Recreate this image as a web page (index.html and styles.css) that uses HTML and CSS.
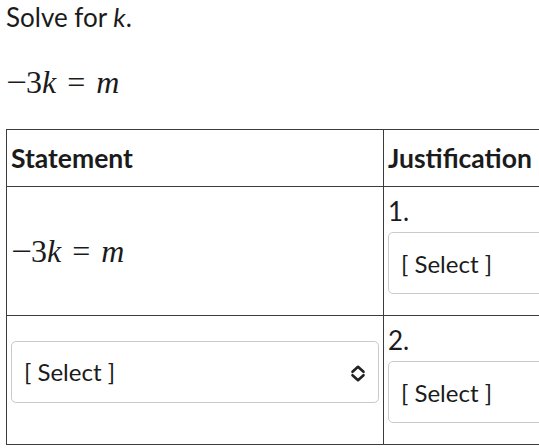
FILE: index.html
```html
<!DOCTYPE html>
<html lang="en">
<head>
<meta charset="utf-8">
<title>Solve for k</title>
<link rel="stylesheet" href="styles.css">
</head>
<body>
  <p class="prompt">Solve for <i>k</i>.</p>
  <p class="math eq-top"><span class="op">&minus;</span>3<i>k</i><span class="rel">=</span><i>m</i></p>

  <table class="proof">
    <colgroup>
      <col class="col-statement">
      <col class="col-justification">
    </colgroup>
    <thead>
      <tr>
        <th>Statement</th>
        <th>Justification</th>
      </tr>
    </thead>
    <tbody>
      <tr>
        <td class="statement">
          <span class="math"><span class="op">&minus;</span>3<i>k</i><span class="rel">=</span><i>m</i></span>
        </td>
        <td class="justification">
          <div class="step">1.</div>
          <div class="select-wrap">
            <select class="dropdown"><option>[ Select ]</option></select>
            <svg class="chevron" viewBox="0 0 16 17" aria-hidden="true"><path d="M2.5 6.8 8 1.8l5.5 5M2.5 10.2 8 15.2l5.5-5" fill="none" stroke="#222" stroke-width="2.6" stroke-linecap="round" stroke-linejoin="round"/></svg>
          </div>
        </td>
      </tr>
      <tr>
        <td class="statement">
          <div class="select-wrap">
            <select class="dropdown"><option>[ Select ]</option></select>
            <svg class="chevron" viewBox="0 0 16 17" aria-hidden="true"><path d="M2.5 6.8 8 1.8l5.5 5M2.5 10.2 8 15.2l5.5-5" fill="none" stroke="#222" stroke-width="2.6" stroke-linecap="round" stroke-linejoin="round"/></svg>
          </div>
        </td>
        <td class="justification">
          <div class="step">2.</div>
          <div class="select-wrap">
            <select class="dropdown"><option>[ Select ]</option></select>
            <svg class="chevron" viewBox="0 0 16 17" aria-hidden="true"><path d="M2.5 6.8 8 1.8l5.5 5M2.5 10.2 8 15.2l5.5-5" fill="none" stroke="#222" stroke-width="2.6" stroke-linecap="round" stroke-linejoin="round"/></svg>
          </div>
        </td>
      </tr>
    </tbody>
  </table>
</body>
</html>
```

FILE: styles.css
```css
html, body {
  overflow: hidden;
}

body {
  margin: 0;
  padding: 0 6px;
  width: 900px;
  font-family: Lato, "Noto Sans", sans-serif;
  font-size: 22px;
  color: #1b1b1b;
  background: #fff;
}

.prompt {
  margin: 0;
  font-size: 26px;
  line-height: 34px;
}

.math {
  font-family: "Liberation Serif", "Times New Roman", serif;
  font-size: 32px;
  line-height: 34px;
  white-space: nowrap;
}

.math .op {
  display: inline-block;
  transform: scaleX(1.15);
  transform-origin: left center;
  margin-right: 2px;
}

.math .rel {
  margin: 0 11px;
}

.eq-top {
  margin: 31px 0 30px;
}

.proof {
  border-collapse: collapse;
  table-layout: fixed;
  width: 760px;
}

.col-statement {
  width: 377px;
}

.proof th,
.proof td {
  border: 1px solid #3c3c3c;
  padding: 4px;
}

.proof th {
  text-align: left;
  font-size: 26.5px;
  font-weight: 700;
  line-height: 48px;
}

.statement {
  vertical-align: middle;
}

.justification {
  vertical-align: top;
}

.step {
  font-size: 26px;
  line-height: 41px;
}

.select-wrap {
  position: relative;
  margin-bottom: 17px;
}

.dropdown {
  appearance: none;
  -webkit-appearance: none;
  display: block;
  width: 100%;
  height: 62px;
  margin: 0;
  padding: 0 12px;
  border: 1px solid #c6cbcf;
  border-radius: 5px;
  background: #fff;
  font-family: Lato, "Noto Sans", sans-serif;
  font-size: 24px;
  color: #1b1b1b;
}

.chevron {
  position: absolute;
  right: 13px;
  top: 24px;
  width: 16px;
  height: 17px;
}
```
